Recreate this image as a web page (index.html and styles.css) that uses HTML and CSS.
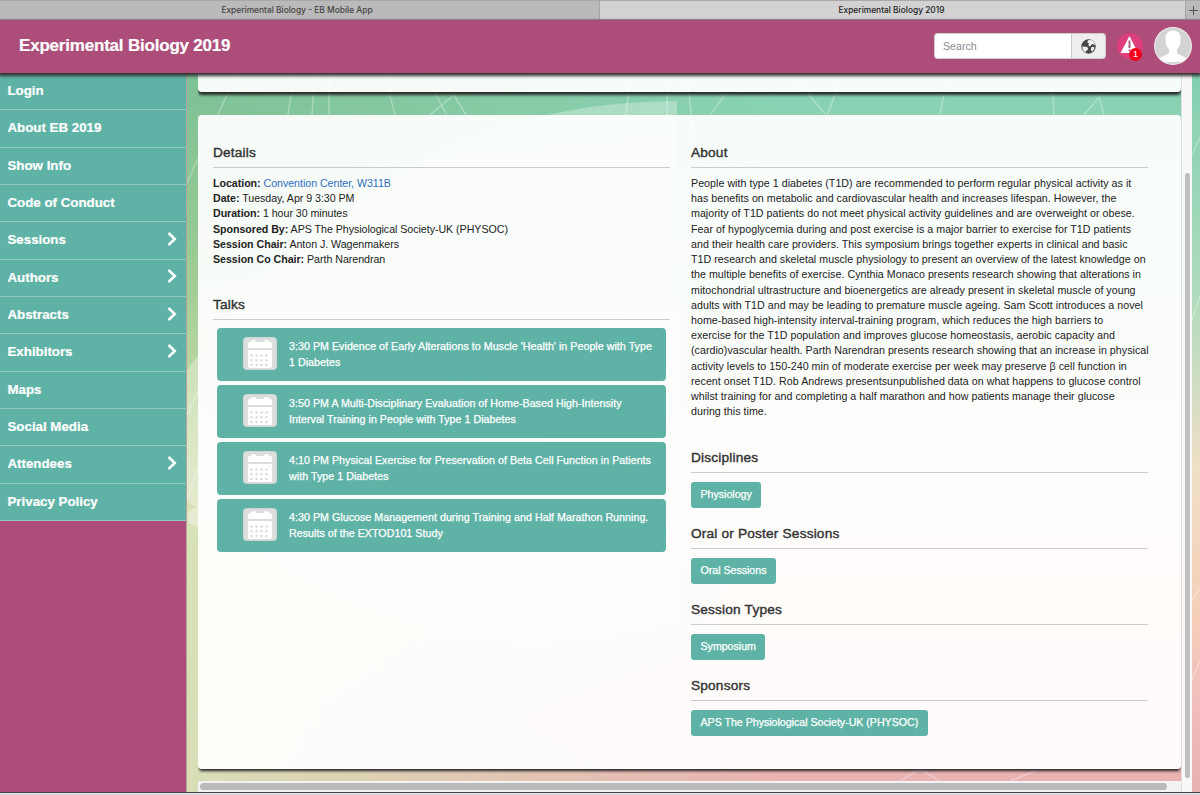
FILE: index.html
```html
<!DOCTYPE html>
<html lang="en">
<head>
    <meta charset="UTF-8">
    <meta name="viewport" content="width=device-width, initial-scale=1.0">
    <title>Experimental Biology 2019</title>
    <link rel="stylesheet" href="styles.css">
</head>
<body>
    <svg class="symbols" width="0" height="0">
        <symbol id="calendar" viewBox="0 0 34 33">
            <rect x="0.5" y="0.5" width="33" height="32" rx="3" fill="#dcdedd" stroke="#cfd5d3"/>
            <path d="M5 11V7q0-2 2-2h1q0-2 2.500-2t2.500 2h8q0-2 2.500-2t2.500 2h1q2 0 2 2v4z" fill="#fff"/>
            <path d="M5 13h24v16q0 2-2 2H7q-2 0-2-2z" fill="#fff"/>
            <g stroke="#d3d5d4" stroke-width="2" stroke-dasharray="2 3">
                <path d="M7.500 18.500h19.500M7.500 23.200h19.500M7.500 27.900h19.500"/>
            </g>
        </symbol>
        <symbol id="chevron" viewBox="0 0 10 14">
            <path d="M1.500 1L7.800 7l-6.300 6" fill="none" stroke="#fff" stroke-width="2.500"/>
        </symbol>
    </svg>

    <div class="tabs">
        <div class="tab">Experimental Biology - EB Mobile App</div>
        <div class="tab active">Experimental Biology 2019</div>
        <div class="new-tab"><svg width="9" height="9" viewBox="0 0 9 9"><path d="M4.500 0v9M0 4.500h9" stroke="#555"/></svg></div>
    </div>

    <div class="header">
        <h1>Experimental Biology 2019</h1>
        <div class="search">
            <input type="text" placeholder="Search">
            <button>
                <svg width="15" height="15" viewBox="0 0 15 15">
                    <circle cx="7.500" cy="7.500" r="7.200" fill="#444"/>
                    <path d="M6.800 1.200l3.700-.1 2.300 1.600 1.300 2.800-.8.700-1.300-1.300-1.600.5-.6 1.500-1.700.3-.9-1.400.9-1.500-1.600-.6zM1.300 7.200l1.800.5 1.900-.2 2.200 1.400-.6 2-1.600 1-.5 1.600-1.700-1.300-1.300-2.500zM10 8.600l1.600-.8 2 .6-.6 2-1.900 2-1-1z" fill="#eee"/>
                </svg>
            </button>
        </div>
        <div class="alert">
            <svg width="26" height="26" viewBox="0 0 26 26">
                <circle cx="13" cy="13" r="13" fill="#dc3f7b"/>
                <path d="M12.500 3L21 20H3.500z" fill="#fff"/>
                <path d="M12.500 7.500v7.500M12.500 16.500v1.500" stroke="#a84c70" stroke-width="1.800"/>
            </svg>
            <span class="badge">1</span>
        </div>
        <svg class="avatar" width="38" height="38" viewBox="0 0 38 38">
            <defs><clipPath id="round"><circle cx="19" cy="19" r="18"/></clipPath></defs>
            <circle cx="19" cy="19" r="19" fill="#eee"/>
            <g clip-path="url(#round)">
                <path d="M0 0h38v38H0z" fill="#d3d3d3"/>
                <path d="M19 3.500c5.500 0 8 3.500 7.500 9 0 5-1.500 8-3.500 10v3c1 3 8 3.500 11 6.500v3H4v-3c3-3 10-3.500 11-6.500v-3c-2-2-3.500-5-3.500-10-.5-5.500 2-9 7.500-9z" fill="#fff"/>
            </g>
        </svg>
    </div>

    <div class="page">
        <svg class="backdrop" width="1200" height="720" viewBox="0 73 1200 720" preserveAspectRatio="none">
            <defs>
                <linearGradient id="left" x1="0" y1="0" x2="0" y2="1">
                    <stop offset="0" stop-color="#7cc197"/>
                    <stop offset="0.250" stop-color="#99cb92"/>
                    <stop offset="0.450" stop-color="#c1d9a4"/>
                    <stop offset="0.600" stop-color="#d8e3b8"/>
                    <stop offset="1" stop-color="#d9dfb6"/>
                </linearGradient>
                <linearGradient id="right" x1="0" y1="0" x2="0" y2="1">
                    <stop offset="0" stop-color="#83d0b1"/>
                    <stop offset="0.300" stop-color="#aedbbd"/>
                    <stop offset="0.550" stop-color="#efdfc6"/>
                    <stop offset="0.750" stop-color="#f6cfb9"/>
                    <stop offset="0.880" stop-color="#f0bdbb"/>
                    <stop offset="1" stop-color="#e8b0b0"/>
                </linearGradient>
                <linearGradient id="blend">
                    <stop offset="0.150" stop-color="#000"/>
                    <stop offset="0.650" stop-color="#fff"/>
                </linearGradient>
                <mask id="fade"><path d="M0 73h1200v720H0z" fill="url(#blend)"/></mask>
            </defs>
            <path d="M0 73h1200v720H0z" fill="url(#left)"/>
            <path d="M0 73h1200v720H0z" fill="url(#right)" mask="url(#fade)"/>
            <path d="M187 370Q380 101 677 101V620Q420 700 187 500z" fill="#fff" opacity="0.300"/>
            <g stroke="#fff" stroke-width="1.500" opacity="0.300" fill="none">
                <path d="M187 183l52-115M288 115l6-42M312 115l3-42M329 115V73M395 115l-11-42M430 115l24-20 12 20M430 84l17 31M624 130l7-57M667 120V73M695 150l-8-77M710 115l20-27M790 73l37 43 16-43M940 115l8-42M1054 115l-2-42M1084 115l15-18 5 18M1192 155l8-18M1192 320l8-24M1192 600l8-12M1192 680l8-20"/>
                <path d="M187 415l11-24M187 500l11-32M900 781l20-12 20 12M1010 781l30-12"/>
            </g>
            <circle cx="196" cy="517" r="9" fill="#fff" opacity="0.350"/>
        </svg>

        <ul class="menu">
            <li>Login</li>
            <li>About EB 2019</li>
            <li>Show Info</li>
            <li>Code of Conduct</li>
            <li>Sessions <svg><use href="#chevron"/></svg></li>
            <li>Authors <svg><use href="#chevron"/></svg></li>
            <li>Abstracts <svg><use href="#chevron"/></svg></li>
            <li>Exhibitors <svg><use href="#chevron"/></svg></li>
            <li>Maps</li>
            <li>Social Media</li>
            <li>Attendees <svg><use href="#chevron"/></svg></li>
            <li>Privacy Policy</li>
        </ul>

        <div class="content">
            <div class="scroll-area">
                <div class="panel panel-top"></div>
                <div class="panel panel-main">
                    <div class="column">
                        <h2>Details</h2>
                        <div class="text details">
                            <p><b>Location:</b> <a>Convention Center, W311B</a></p>
                            <p><b>Date:</b> Tuesday, Apr 9 3:30 PM</p>
                            <p><b>Duration:</b> 1 hour 30 minutes</p>
                            <p><b>Sponsored By:</b> APS The Physiological Society-UK (PHYSOC)</p>
                            <p><b>Session Chair:</b> Anton J. Wagenmakers</p>
                            <p><b>Session Co Chair:</b> Parth Narendran</p>
                        </div>
                        <h2>Talks</h2>
                        <div class="talks">
                            <div class="talk"><svg><use href="#calendar"/></svg><p>3:30 PM Evidence of Early Alterations to Muscle 'Health' in People with Type<br>1 Diabetes</p></div>
                            <div class="talk"><svg><use href="#calendar"/></svg><p>3:50 PM A Multi-Disciplinary Evaluation of Home-Based High-Intensity<br>Interval Training in People with Type 1 Diabetes</p></div>
                            <div class="talk"><svg><use href="#calendar"/></svg><p>4:10 PM Physical Exercise for Preservation of Beta Cell Function in Patients<br>with Type 1 Diabetes</p></div>
                            <div class="talk"><svg><use href="#calendar"/></svg><p>4:30 PM Glucose Management during Training and Half Marathon Running.<br>Results of the EXTOD101 Study</p></div>
                        </div>
                    </div>
                    <div class="column">
                        <h2>About</h2>
                        <p class="text about">People with type 1 diabetes (T1D) are recommended to perform regular physical activity as it<br>
                            has benefits on metabolic and cardiovascular health and increases lifespan. However, the<br>
                            majority of T1D patients do not meet physical activity guidelines and are overweight or obese.<br>
                            Fear of hypoglycemia during and post exercise is a major barrier to exercise for T1D patients<br>
                            and their health care providers. This symposium brings together experts in clinical and basic<br>
                            T1D research and skeletal muscle physiology to present an overview of the latest knowledge on<br>
                            the multiple benefits of exercise. Cynthia Monaco presents research showing that alterations in<br>
                            mitochondrial ultrastructure and bioenergetics are already present in skeletal muscle of young<br>
                            adults with T1D and may be leading to premature muscle ageing. Sam Scott introduces a novel<br>
                            home-based high-intensity interval-training program, which reduces the high barriers to<br>
                            exercise for the T1D population and improves glucose homeostasis, aerobic capacity and<br>
                            (cardio)vascular health. Parth Narendran presents research showing that an increase in physical<br>
                            activity levels to 150-240 min of moderate exercise per week may preserve β cell function in<br>
                            recent onset T1D. Rob Andrews presentsunpublished data on what happens to glucose control<br>
                            whilst training for and completing a half marathon and how patients manage their glucose<br>
                            during this time.</p>
                        <h2>Disciplines</h2>
                        <a class="tag">Physiology</a>
                        <h2>Oral or Poster Sessions</h2>
                        <a class="tag">Oral Sessions</a>
                        <h2>Session Types</h2>
                        <a class="tag">Symposium</a>
                        <h2>Sponsors</h2>
                        <a class="tag">APS The Physiological Society-UK (PHYSOC)</a>
                    </div>
                </div>
            </div>
            <div class="scroll-x"><div class="thumb"></div></div>
        </div>
        <div class="scroll-y"><div class="thumb"></div></div>
    </div>
</body>
</html>
```

FILE: styles.css
```css
* {
    margin: 0;
    padding: 0;
    box-sizing: border-box;
}
body {
    width: 1200px;
    height: 795px;
    overflow: hidden;
    font-family: "Liberation Sans", Arial, sans-serif;
    font-size: 10.66px;
    line-height: 15.22px;
    color: #333;
    background-color: #dcdce0;
}
.symbols {
    position: absolute;
}

/* browser tabs */
.tabs {
    display: flex;
    height: 20px;
    border-top: 1px solid #a8a8a8;
    border-bottom: 1px solid #a0909a;
    background-color: #bababa;
}
.tab {
    width: 600px;
    padding-right: 5px;
    border-right: 1px solid #a5a5a5;
    font-family: Inter, sans-serif;
    font-size: 8.4px;
    font-weight: 500;
    line-height: 18px;
    text-align: center;
    color: #444;
}
.tab.active {
    width: 586px;
    padding-right: 2px;
    background-color: #d2d2d2;
    color: #222;
}
.new-tab {
    display: flex;
    flex: 1;
    align-items: center;
    justify-content: center;
}

/* app header */
.header {
    position: relative;
    z-index: 2;
    display: flex;
    align-items: center;
    height: 53px;
    padding: 0 8px 1px 19px;
    background-color: #ad4d79;
    box-shadow: 0 2px 3px 1px #333;
}
h1 {
    flex: 1;
    font-size: 17px;
    line-height: 20px;
    letter-spacing: -0.2px;
    color: white;
    -webkit-text-stroke: 0.2px white;
}
.search {
    display: flex;
    width: 172px;
    height: 26px;
    margin-right: 11px;
    border: 1px solid #ccc;
    border-radius: 3px;
    overflow: hidden;
}
.search input {
    width: 136px;
    padding: 0 8px;
    border: none;
    font-family: inherit;
    font-size: 10.66px;
    background-color: white;
}
.search input::placeholder {
    color: #8c8c8c;
}
.search button {
    display: flex;
    flex: 1;
    align-items: center;
    justify-content: center;
    border: none;
    border-left: 1px solid #ccc;
    background-color: #eee;
}
.alert {
    position: relative;
    width: 26px;
    height: 26px;
    margin-right: 11px;
}
.badge {
    position: absolute;
    right: 1px;
    bottom: -2px;
    width: 13px;
    height: 13px;
    border-radius: 50%;
    background-color: #f5001d;
    font-size: 9px;
    line-height: 13px;
    text-align: center;
    color: white;
}

.page {
    position: relative;
    display: flex;
    height: 720px;
    border-bottom: 1px solid #444;
    background-color: #ad4d79;
}
.backdrop {
    position: absolute;
    top: 0;
    left: 0;
    clip-path: inset(0 0 1px 187px);
}

/* side menu */
.menu {
    position: relative;
    width: 187px;
    border-right: 1px solid #b8a0a0;
    background-color: #ad4d79;
    list-style-type: none;
}
.menu li {
    display: flex;
    align-items: center;
    justify-content: space-between;
    height: 37.33px;
    padding: 0 9px 1px 7.5px;
    border-bottom: 1px solid #90c9bf;
    background-color: #5fb3a6;
    font-size: 13.3px;
    font-weight: bold;
    color: white;
    -webkit-text-stroke: 0.2px white;
}
.menu li svg {
    width: 10px;
    height: 14px;
    margin-bottom: 2px;
}

/* scrolling content */
.content {
    position: relative;
    width: 994px;
    padding-left: 11px;
}
.scroll-area {
    height: 708px;
    overflow: hidden;
}
.panel {
    border-radius: 4px;
    background-color: rgba(255, 255, 255, 0.93);
    box-shadow: 0 3px 3px #2a2a2a;
}
.panel-top {
    height: 19px;
    margin-bottom: 23px;
    border-radius: 0 0 4px 4px;
}
.panel-main {
    display: flex;
    gap: 21px;
    height: 654px;
    padding: 30px 33px 0 15px;
    box-shadow: 0 3px 3px -1px #222;
}
.column {
    width: 457px;
}
h2 {
    height: 23px;
    margin-bottom: 8px;
    border-bottom: 1px solid #ccc;
    font-size: 13.7px;
    font-weight: normal;
    line-height: 15px;
    letter-spacing: 0.17px;
    -webkit-text-stroke: 0.4px #333;
}
.text {
    margin-bottom: 30px;
    color: #222;
    white-space: nowrap;
}
.details {
    letter-spacing: -0.04px;
}
.about {
    letter-spacing: 0.035px;
}
.text a {
    color: #2f6dc0;
}
.talks {
    padding: 0 4px;
}
.talk {
    display: flex;
    gap: 12px;
    height: 53px;
    margin-bottom: 4px;
    padding: 9px 0 0 26px;
    border-radius: 4px;
    background-color: #5fb3a6;
    letter-spacing: 0.04px;
    color: white;
    white-space: nowrap;
}
.talk p {
    padding-top: 2px;
}
.talk,
.tag {
    -webkit-text-stroke: 0.25px white;
}
.talk svg {
    width: 34px;
    height: 33px;
}
.tag {
    display: block;
    width: fit-content;
    height: 26px;
    margin: 9px 0 18px;
    padding: 0 9.5px;
    border-radius: 3px;
    background-color: #5fb3a6;
    letter-spacing: -0.03px;
    line-height: 25px;
    color: white;
}

/* scrollbars */
.scroll-x {
    height: 11px;
    padding: 2px 14px 0 2px;
    background-color: #f3f3f4;
}
.scroll-x .thumb {
    height: 7px;
    border-radius: 4px;
    background-color: #bababa;
}
.scroll-y {
    position: relative;
    width: 11px;
    padding: 100px 2px 0 3px;
    border-left: 1px solid #ddd;
    background-color: #f8f8f8;
}
.scroll-y .thumb {
    height: 605px;
    border-radius: 3px;
    background-color: #bfbfc1;
}
```
